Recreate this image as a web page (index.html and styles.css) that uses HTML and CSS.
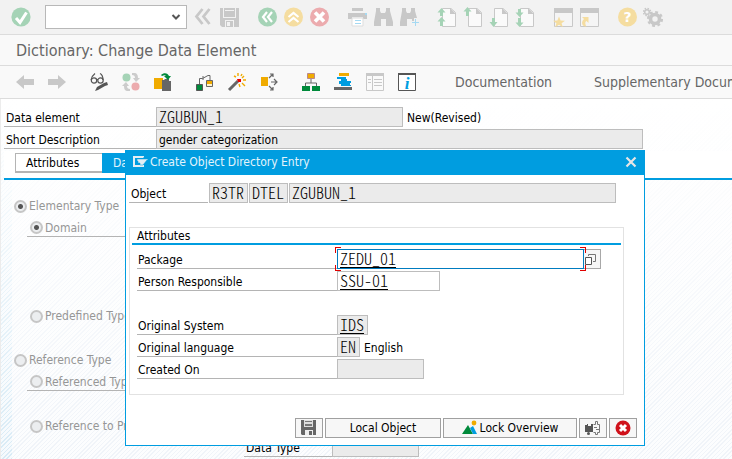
FILE: index.html
```html
<!DOCTYPE html>
<html lang="en">
<head>
<meta charset="utf-8">
<meta name="viewport" content="width=device-width, initial-scale=1">
<title>Dictionary: Change Data Element</title>
<link rel="stylesheet" href="styles.css">
</head>
<body>
<header class="system-bar">
  <button class="icon" aria-label="Enter"><svg viewBox="0 0 20 20"><circle cx="10" cy="10" r="9.6" fill="#a5d3b6"/><path d="M5 11l4 4.5L15.500 5.500" fill="none" stroke="#fff" stroke-width="3"/></svg></button>
  <select class="command" aria-label="Command"><option></option></select>
  <div class="group">
    <button class="icon" aria-label="Collapse"><svg viewBox="0 0 20 20"><path d="M9.500 2L3.500 9.500l6 7.500M16.500 2l-6 7.500 6 7.500" fill="none" stroke="#c8c8c8" stroke-width="2.800"/></svg></button>
    <button class="icon" aria-label="Save"><svg viewBox="0 0 20 20"><path d="M1 1h19v19H3l-2-2z" fill="#c8c8c8"/><path d="M4 1h1v9h11V1h1v10H4zM6 3h9v1H6zM6 13h9v7h-1v-6H7v6H6z" fill="#f2f2f2"/><path d="M8 15h3v4H8z" fill="#f2f2f2"/></svg></button>
  </div>
  <div class="group">
    <button class="icon" aria-label="Back"><svg viewBox="0 0 20 20"><circle cx="10.500" cy="10" r="9.500" fill="#a5d3b6"/><path d="M10 5l-4 5 4 5M15 5l-4 5 4 5" fill="none" stroke="#fff" stroke-width="2.200"/></svg></button>
    <button class="icon" aria-label="Exit"><svg viewBox="0 0 20 20"><circle cx="10.500" cy="10" r="9.500" fill="#f5dda0"/><path d="M5.500 10l5-4 5 4M5.500 15l5-4 5 4" fill="none" stroke="#fff" stroke-width="2.200"/></svg></button>
    <button class="icon" aria-label="Cancel"><svg viewBox="0 0 20 20"><circle cx="10.500" cy="10" r="9.500" fill="#ecabae"/><path d="M6 5.500l9 9M15 5.500l-9 9" stroke="#fff" stroke-width="3.600"/></svg></button>
  </div>
  <div class="group">
    <button class="icon" aria-label="Print"><svg viewBox="0 0 20 20"><path d="M5 1h11v3H5zM1 6h19v6h-4v-2H5v2H1z" fill="#c8c8c8"/><path d="M5 11h11v8H5z" fill="#fff" stroke="#ddd"/><path d="M8 13h6v1H8zM8 16h6v1H8zM18 6h2v2h-2z" fill="#a5d9f2"/></svg></button>
    <button class="icon" aria-label="Find"><svg viewBox="0 0 20 20"><path d="M3 1h4v3l1 2h4l1-2V1h4v3l3 11v4h-7v-7H8v7H1v-4L3 4z" fill="#c8c8c8"/></svg></button>
    <button class="icon" aria-label="Find next"><svg viewBox="0 0 20 20"><path d="M3 1h4v3l1 2h3l1-2V1h4v3l2 7h-3v3h-2v-2H8v7H1v-4L3 4z" fill="#c8c8c8"/><path d="M16 12h1v3h3v1h-3v3h-1v-3h-3v-1h3z" fill="#a5d9f2"/></svg></button>
  </div>
  <div class="group">
    <button class="icon" aria-label="First page"><svg viewBox="0 0 20 20"><path d="M5.500 1.500H14l4.500 4v14h-13z" fill="#fafafa" stroke="#c8c8c8"/><path d="M13 1v6h6z" fill="#c8c8c8"/><path d="M4.500 1l4 4.500H6V9H3V5.500H.5zM4.500 10l4 4.500H6V19H3v-4.500H.5z" fill="#a5d3b6"/></svg></button>
    <button class="icon" aria-label="Previous page"><svg viewBox="0 0 20 20"><path d="M5.500 1.500H14l4.500 4v14h-13z" fill="#fafafa" stroke="#c8c8c8"/><path d="M13 1v6h6z" fill="#c8c8c8"/><path d="M4.500 0l4 4.500H6V9H3V4.500H.5z" fill="#a5d3b6"/></svg></button>
    <button class="icon" aria-label="Next page"><svg viewBox="0 0 20 20"><path d="M5.500 1.500H14l4.500 4v14h-13z" fill="#fafafa" stroke="#c8c8c8"/><path d="M13 1v6h6z" fill="#c8c8c8"/><path d="M4.500 20l4-5H6v-4H3v4H.5z" fill="#a5d3b6"/></svg></button>
    <button class="icon" aria-label="Last page"><svg viewBox="0 0 20 20"><path d="M5.500 1.500H14l4.500 4v14h-13z" fill="#fafafa" stroke="#c8c8c8"/><path d="M13 1v6h6z" fill="#c8c8c8"/><path d="M4.500 10l4-4.500H6V2H3v3.500H.5zM4.500 20l4-4.500H6V11H3v4.500H.5z" fill="#a5d3b6"/></svg></button>
  </div>
  <div class="group">
    <button class="icon" aria-label="New session"><svg viewBox="0 0 20 20"><path d="M1.500 1.500h18v18h-18z" fill="#f5f5f5" stroke="#c8c8c8"/><path d="M1 1h19v5H1z" fill="#c8c8c8"/><path d="M6 9.500l1.600 4 4.400.2-3.400 2.500 1.200 4-3.800-2.400-3.800 2.400 1.200-4L0 13.700l4.400-.2z" fill="#f5dda0"/></svg></button>
    <button class="icon" aria-label="Create shortcut"><svg viewBox="0 0 20 20"><path d="M1.500 1.500h18v18h-18z" fill="#f5f5f5" stroke="#c8c8c8"/><path d="M1 1h19v5H1z" fill="#c8c8c8"/><path d="M3 10h6.500v6l-2-2c-2 1-1 4 0 5.500C3 20 1.500 15 5 12z" fill="#f5dda0"/></svg></button>
  </div>
  <div class="group">
    <button class="icon" aria-label="Help"><svg viewBox="0 0 20 20"><circle cx="10.500" cy="10" r="9.500" fill="#f5dda0"/><text x="10.500" y="15" class="help-mark">?</text></svg></button>
    <button class="icon" aria-label="Customize layout"><svg viewBox="0 0 20 20"><circle cx="12" cy="12" r="4.500" fill="none" stroke="#c8c8c8" stroke-width="3.600"/><circle cx="12" cy="12" r="6.800" fill="none" stroke="#c8c8c8" stroke-width="2.500" stroke-dasharray="2.800 2.540"/><circle cx="4" cy="5" r="2.300" fill="none" stroke="#c8c8c8" stroke-width="1.500"/><circle cx="4" cy="5" r="3.600" fill="none" stroke="#c8c8c8" stroke-width="1.500" stroke-dasharray="1.500 1.330"/></svg></button>
  </div>
</header>
<h1 class="page-title">Dictionary: Change Data Element</h1>
<nav class="app-bar">
  <div class="group">
    <button class="icon" aria-label="Previous object"><svg viewBox="0 0 20 20"><path d="M1 10l8-7v4h10v6H9v4z" fill="#c8c8c8"/></svg></button>
    <button class="icon" aria-label="Next object"><svg viewBox="0 0 20 20"><path d="M19 10l-8-7v4H1v6h10v4z" fill="#c8c8c8"/></svg></button>
  </div>
  <div class="group">
    <button class="icon" aria-label="Display or change"><svg viewBox="0 0 20 20"><g fill="none" stroke="#555" stroke-width="1.200"><path d="M2 8C2.500 5 4 3 6 1.500M14 8c0-3-1-5.500-3-6.500M8 7.500h1"/><circle cx="5" cy="8.500" r="2.700"/><circle cx="11.500" cy="8.500" r="2.700"/></g><path d="M6 19l2-4 7-4 3-1 1 3-3 1-7 4z" fill="#555"/></svg></button>
    <button class="icon" aria-label="Active or inactive"><svg viewBox="0 0 20 20"><circle cx="5.500" cy="5.500" r="4" fill="#a5d3b6"/><circle cx="14.500" cy="14.500" r="4" fill="#ecabae"/><path d="M11 1h2c3 0 4 2 4 5h2l-4 4-3-4h2c0-2-1-3-3-3zM9 19H7c-3 0-4-2-4-5H1l4-4 3 4H6c0 2 1 3 3 3z" fill="#ccc"/></svg></button>
    <button class="icon" aria-label="Copy object"><svg viewBox="0 0 20 20"><path d="M1 6h9v11H1z" fill="#f0ab00"/><path d="M9 8h2l1-1h4v2h2v10H9z" fill="#666"/><path d="M8 3c3-3 7-2 8 1h2l-3 4-4-4h2c-1-1-2-1-4 0z" fill="#008a3b"/></svg></button>
  </div>
  <div class="group">
    <button class="icon" aria-label="Where-used list"><svg viewBox="0 0 20 20"><path d="M4.500 12V6.500h3L13 3.500h2V8M8 4v4" fill="none" stroke="#666"/><path d="M1.500 12.500h6v6h-6z" fill="#008a3b" stroke="#555"/><path d="M11.500 8.500h6v6h-6z" fill="#f0ab00" stroke="#666"/><path d="M12 12h5v2h-5z" fill="#fff3cc"/></svg></button>
    <button class="icon" aria-label="Activate"><svg viewBox="0 0 20 20"><path d="M2 18l9-9" stroke="#666" stroke-width="3"/><path d="M10 7h4v3h-3z" fill="#e00"/><path d="M11 1v3M15 2l-1 2M7 4l2 1M17 4l-2 2M16 8h3M15 11l3 3M12 12l1 3" stroke="#f0ab00" stroke-width="1.400"/></svg></button>
    <button class="icon" aria-label="Distribute"><svg viewBox="0 0 20 20"><path d="M2 5h7v9H2z" fill="#f0ab00"/><path d="M10 6l4-4M11 2h3v3M12 10h6M15 7l3 3-3 3M10 14l4 4M11 18h3v-3" fill="none" stroke="#666" stroke-width="1.200"/></svg></button>
  </div>
  <div class="group">
    <button class="icon" aria-label="Object hierarchy"><svg viewBox="0 0 20 20"><path d="M10 6v5M4.500 15v-4h11v4" fill="none" stroke="#666"/><path d="M6.500 1.500h7v5h-7z" fill="#f0ab00" stroke="#b88"/><path d="M1 14h8v5H1zM11 14h8v5h-8z" fill="#008a3b"/></svg></button>
    <button class="icon" aria-label="Object list"><svg viewBox="0 0 20 20"><path d="M6 1h10v3H6z" fill="#f0ab00"/><path d="M4 5h9v2h1v2h4v2h-1v2h1v1H8v-2H6V9h2V7H4z" fill="#009de0"/><path d="M1 15h18v3H1z" fill="#666"/></svg></button>
    <button class="icon" aria-label="Table contents"><svg viewBox="0 0 20 20"><path d="M1.500 1.500h17v17h-17z" fill="#fafafa" stroke="#c8c8c8"/><path d="M1 1h18v3H1zM7 4h1v15H7zM3 7h3v1H3zM3 10h3v1H3zM9 7h8v1H9zM9 10h8v1H9zM9 13h8v1H9z" fill="#c8c8c8"/></svg></button>
    <button class="icon" aria-label="Information"><svg viewBox="0 0 20 20"><path d="M1.500 1.500h17v17h-17z" fill="#fff" stroke="#555"/><path d="M1 1h18v2H1z" fill="#555"/><text x="10" y="17" class="info-mark">i</text></svg></button>
  </div>
  <button class="link">Documentation</button>
  <button class="link">Supplementary Documentation</button>
</nav>
<main class="screen">
  <form class="header-form">
    <div class="row">
      <label class="caption wide" for="element">Data element</label>
      <input class="field mono name" id="element" value="ZGUBUN_1" readonly>
      <output class="status">New(Revised)</output>
    </div>
    <div class="row">
      <label class="caption wide" for="short">Short Description</label>
      <input class="field text" id="short" value="gender categorization" readonly>
    </div>
  </form>
  <div class="tabs" role="tablist">
    <button class="tab" role="tab">Attributes</button>
    <button class="tab active" role="tab" aria-selected="true">Data Type</button>
  </div>
  <form class="types">
    <label class="choice"><input type="radio" name="kind" checked disabled>Elementary Type</label>
    <label class="choice child lined"><input type="radio" name="elementary" checked disabled>Domain</label>
    <label class="choice child skip-three"><input type="radio" name="elementary" disabled>Predefined Type</label>
    <label class="choice skip-one"><input type="radio" name="kind" disabled>Reference Type</label>
    <label class="choice child lined"><input type="radio" name="reference" disabled>Referenced Type</label>
    <label class="choice child skip-one"><input type="radio" name="reference" disabled>Reference to Predef. Type</label>
    <div class="row predefined">
      <label class="caption" for="datatype">Data Type</label>
      <input class="field date" id="datatype" readonly>
    </div>
  </form>
</main>
<section class="dialog" role="dialog" aria-labelledby="dialog-title">
  <header class="dialog-head">
    <svg class="dialog-icon" viewBox="0 0 16 14"><path d="M11 2.500V2H2v9h9v-1" fill="none" stroke="#e4eef4" stroke-width="2"/><path d="M5 4h11v1h-1l-4 5H8V8H6V6H5z" fill="#e4eef4" stroke="#009de0" stroke-width=".5"/></svg>
    <h2 id="dialog-title">Create Object Directory Entry</h2>
    <button class="close" aria-label="Close"><svg viewBox="0 0 12 12"><path d="M1.500 1.500l9 9M10.500 1.500l-9 9" stroke="#e6e6e6" stroke-width="2.200"/></svg></button>
  </header>
  <form class="dialog-body">
    <div class="row object-row">
      <label class="caption object" for="pgmid">Object</label>
      <input class="field mono code" id="pgmid" value="R3TR" readonly>
      <input class="field mono code" aria-label="Object type" value="DTEL" readonly>
      <input class="field mono grow" aria-label="Object name" value="ZGUBUN_1" readonly>
    </div>
    <fieldset class="attributes">
      <h3>Attributes</h3>
      <div class="row">
        <label class="caption long" for="package">Package</label>
        <span class="focus">
          <input class="field mono edit" id="package" value="ZEDU_01">
          <i class="corner top left"></i><i class="corner top right"></i><i class="corner bottom left"></i><i class="corner bottom right"></i>
        </span>
        <button type="button" class="lookup" aria-label="Search package"><svg viewBox="0 0 14 16"><path d="M4.500 5V3.500h7v7H9" fill="none" stroke="#777"/><path d="M1.500 6.500h6v7h-6z" fill="#fff" stroke="#555"/></svg></button>
      </div>
      <div class="row">
        <label class="caption long" for="person">Person Responsible</label>
        <input class="field mono edit person" id="person" value="SSU-01">
      </div>
      <div class="row apart">
        <label class="caption long" for="system">Original System</label>
        <input class="field mono linked system" id="system" value="IDS" readonly>
      </div>
      <div class="row">
        <label class="caption long" for="lang">Original language</label>
        <input class="field mono lang" id="lang" value="EN" readonly>
        <output class="status">English</output>
      </div>
      <div class="row">
        <label class="caption long" for="created">Created On</label>
        <input class="field date" id="created" readonly>
      </div>
    </fieldset>
    <footer class="actions">
      <button type="button" class="action small" aria-label="Save"><svg viewBox="0 0 16 16"><path d="M0 0h15v15H1l-1-1z" fill="#666"/><path d="M3 0h9v7H3z" fill="#ddd"/><path d="M4 1h7v1H4zM4 4h7v2H4z" fill="#777"/><path d="M4 10h8v5H4z" fill="#eee"/><path d="M8 11h3v4H8z" fill="#666"/></svg></button>
      <button type="button" class="action local">Local Object</button>
      <button type="button" class="action lock"><svg viewBox="0 0 16 16"><path d="M0 14l6-9 5 9z" fill="#008a3b"/><path d="M8 8l3-2 4 8h-4z" fill="#009de0"/><circle cx="12" cy="3" r="2.400" fill="#f0ab00"/></svg>Lock Overview</button>
      <button type="button" class="action small" aria-label="Create request"><svg viewBox="0 0 16 16"><path d="M0 5h2V4h1v2h3V4h2v8H0z" fill="#555"/><circle cx="3.500" cy="13.500" r="1.500" fill="#555"/><path d="M8.500 4.500h2v-3h2v3h2v8h-2v2h-2v-2h-2M9 7.500h3M11 9.500h3" fill="none" stroke="#777"/></svg></button>
      <button type="button" class="action small" aria-label="Cancel"><svg viewBox="0 0 16 16"><circle cx="8" cy="8" r="7.500" fill="#d0121b"/><path d="M5 5l6 6M11 5l-6 6" stroke="#fff" stroke-width="3"/></svg></button>
    </footer>
  </form>
</section>
</body>
</html>
```
FILE: styles.css
```css
* { box-sizing: border-box; }

body {
  position: relative;
  display: flex;
  flex-direction: column;
  min-height: 100vh;
  margin: 0;
  overflow-x: hidden;
  background: #fff;
  color: #000;
  font: 12px/16px "DejaVu Sans Condensed", "Noto Sans", sans-serif;
  white-space: nowrap;
}

button, input, select { margin: 0; padding: 0; border: 0; border-radius: 0; font: inherit; color: inherit; }
button { background: none; }
h1, h2, h3 { margin: 0; font-weight: normal; }
svg { display: block; }

.system-bar {
  display: flex;
  align-items: center;
  height: 35px;
  padding: 0 11px;
  overflow: hidden;
  background: #f2f2f2;
  border-bottom: 1px solid #dcdcdc;
}
.icon { flex: none; width: 20px; height: 20px; }
.icon svg { width: 20px; height: 20px; }
.group { display: flex; flex: none; }
.system-bar .group { gap: 6px; margin-right: 18px; }
.command {
  flex: none;
  width: 142px;
  height: 24px;
  margin: 0 6px 0 14px;
  appearance: none;
  border: 1px solid #b8b8b8;
  background: #fff url("data:image/svg+xml,%3Csvg xmlns='http://www.w3.org/2000/svg' viewBox='0 0 10 8'%3E%3Cpath d='M1.500 2l3.500 3.500L8.500 2' fill='none' stroke='%23555' stroke-width='2'/%3E%3C/svg%3E") right 5px center / 10px 8px no-repeat;
}
.help-mark { fill: #fff; font: bold 14px "DejaVu Sans", sans-serif; text-anchor: middle; }
.info-mark { fill: #009de0; font: italic bold 17px "Liberation Serif", serif; text-anchor: middle; }

.page-title {
  height: 31px;
  padding-left: 16px;
  background: #f9f9f9;
  border-bottom: 1px solid #dcdcdc;
  color: #666;
  font-size: 16px;
  line-height: 31px;
}

.app-bar {
  display: flex;
  align-items: center;
  height: 33px;
  padding-left: 15px;
  overflow: hidden;
  background: #f9f9f9;
  border-bottom: 1px solid #dcdcdc;
}
.app-bar .group { gap: 12px; margin-right: 22px; }
.link { margin: 0 26px 0 16px; color: #666; font-size: 14px; }

.screen {
  position: relative;
  flex: 1;
  padding: 8px 0 2px 3px;
  border-left: 1px solid #ececec;
  background:
    linear-gradient(#fff, #fff0),
    repeating-linear-gradient(135deg, #f0f4f9 0 1px, #fcfdfe 1px 3px);
}
.screen::before {
  content: "";
  position: absolute;
  inset: 0 auto 0 0;
  width: 11px;
  background:
    linear-gradient(#fff, #fff0),
    repeating-linear-gradient(135deg, #d8ebf6 0 1px, #f6fafd 1px 3px);
}
.screen > * { position: relative; }

.header-form { display: grid; gap: 2px; margin-bottom: 2px; }
.row { display: flex; }
.caption {
  flex: none;
  height: 20px;
  padding: 3px 0 0 2px;
  border-bottom: 1px solid #b4b4b4;
}
.wide { width: 152px; }
.field {
  width: 100px;
  height: 20px;
  padding: 1px 2px 0;
  border: 1px solid #bdbdbd;
  background: #ebebeb;
  outline: 0;
}
.mono {
  padding: 0 2px 2px;
  font-family: "Noto Sans CJK KR", "Liberation Mono", monospace;
  font-size: 16px;
  font-weight: 300;
  font-feature-settings: "hwid";
  line-height: 16px;
}
.name { width: 247px; }
.text { width: 487px; }
.date { width: 87px; }
.status { padding: 3px 0 0 4px; }

.tabs {
  display: flex;
  height: 29px;
  padding: 2px 0 5px 11px;
  background: #fff;
  border-bottom: 2px solid #009de0;
}
.tab { width: 87px; height: 20px; padding: 1px 10px 0; text-align: left; background: #fff; border: 1px solid #b4b4b4; border-width: 1px 0 2px 1px; }
.tab.active { background: #009de0; border-color: #009de0; color: #e4f4fc; }

.types { display: grid; gap: 2px; padding-top: 15px; }
.choice { display: flex; align-items: center; gap: 2px; height: 20px; padding: 2px 0 0 10px; color: #969696; }
.child { margin-left: 23px; padding-left: 3px; }
.lined { border-bottom: 1px solid #b4b4b4; width: 200px; }
.skip-one { margin-top: 22px; }
.skip-three { margin-top: 66px; }
.choice input {
  width: 13px;
  height: 13px;
  appearance: none;
  border: 2px solid #c6c6c6;
  border-radius: 50%;
  background: #eceef0;
}
.choice input:checked { background: radial-gradient(circle, #555 0 2px, #eceef0 3px); }
.predefined { padding-left: 240px; }
.predefined .caption { width: 88px; }

.dialog {
  position: absolute;
  top: 150px;
  left: 125px;
  width: min(520px, calc(100% - 130px));
  border: 1px solid #009de0;
  background: #fff;
}
.dialog-head {
  display: flex;
  align-items: center;
  height: 24px;
  padding: 0 7px 2px 6px;
  background: #009de0;
  color: #e4f4fc;
}
.dialog-icon { width: 16px; height: 14px; margin-right: 2px; }
.dialog-head h2 { flex: 1; font-size: 12px; }
.close svg { width: 12px; height: 12px; }
.dialog-body { padding: 8px 7px 7px 3px; }
.object-row { gap: 1px; padding-right: 21px; }
.object { width: 79px; }
.code { width: 39px; }
.grow { flex: 1; min-width: 0; }

.attributes {
  display: grid;
  gap: 2px;
  min-width: 0;
  margin: 24px 13px 23px 0;
  padding: 0 2px 15px;
  border: 1px solid #e2e2e2;
}
.attributes h3 {
  height: 17px;
  padding-left: 5px;
  margin-bottom: 2px;
  border-bottom: 2px solid #009de0;
  font-size: 12px;
  line-height: 16px;
}
.attributes .row { padding-left: 5px; }
.attributes .caption { padding-left: 1px; }
.long { width: 200px; }
.edit, .linked {
  text-decoration: underline;
  text-decoration-skip-ink: none;
  text-underline-offset: 2px;
}
.edit { background: #fff; }
.focus { position: relative; flex: 1; max-width: 247px; }
.focus .edit { display: block; width: 100%; border-color: #007cc0; }
.corner { position: absolute; width: 6px; height: 6px; border: 0 solid #e00000; }
.top { top: -2px; border-top-width: 1px; }
.bottom { bottom: -2px; border-bottom-width: 1px; }
.left { left: -2px; border-left-width: 1px; }
.right { right: -2px; border-right-width: 1px; }
.lookup { width: 17px; height: 20px; background: #f7f7f7; border: 1px solid #a8a8a8; border-left: 0; }
.lookup svg { width: 14px; height: 16px; }
.person { width: 103px; }
.apart { margin-top: 22px; }
.system { width: 31px; }
.lang { width: 23px; }

.actions { display: flex; justify-content: flex-end; gap: 2px; }
.action {
  display: flex;
  align-items: center;
  justify-content: center;
  gap: 2px;
  height: 20px;
  background: #f7f7f7;
  border: 1px solid #a0a0a0;
}
.action svg { width: 16px; height: 16px; }
.small { width: 28px; }
.local { width: 116px; }
.lock { width: 134px; }
```
